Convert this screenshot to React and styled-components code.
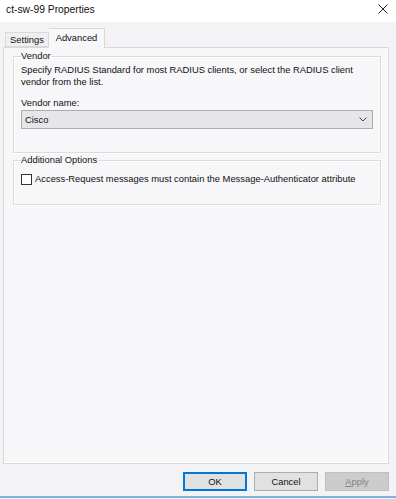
import React from "react";
import styled, { createGlobalStyle } from "styled-components";

const Global = createGlobalStyle`
  html, body { margin: 0; padding: 0; }
  body {
    width: 396px; height: 499px; overflow: hidden;
    background: #f3f2f5;
    font-family: "Liberation Sans", Arial, sans-serif;
    color: #1a1a1a;
  }
`;

const Window = styled.div`
  width: 396px; height: 499px;
  display: flex; flex-direction: column;
  background: #f3f2f5;
`;

const TitleBar = styled.div`
  height: 22px; flex: none;
  background: #ffffff;
  display: flex; align-items: center; justify-content: space-between;
  padding: 0 8px 2px 6px; box-sizing: border-box;
`;

const Title = styled.span`
  font-size: 10.3px; color: #111; line-height: 12px;
`;

const Close = styled.svg`
  width: 10px; height: 10px; margin-bottom: 2px;
`;

const Body = styled.div`
  flex: 1; display: flex; flex-direction: column;
  padding: 6px 7px 0 3px;
`;

const TabStrip = styled.div`
  display: flex; align-items: flex-end;
  padding-left: 2px; height: 19px;
  position: relative; z-index: 1;
`;

const Tab = styled.div`
  box-sizing: border-box;
  border: 1px solid #d9d9d9;
  border-bottom: ${p => (p.$active ? "none" : "1px solid #d9d9d9")};
  ${p => (p.$active ? "border-left: none;" : "")}
  background: ${p => (p.$active ? "#f7f6f9" : "#efeef1")};
  width: ${p => p.$w}px;
  height: ${p => (p.$active ? 20 : 15)}px;
  margin-bottom: ${p => (p.$active ? -1 : 0)}px;
  font-size: 9.4px; line-height: 12px;
  display: flex; justify-content: center;
  padding-top: ${p => (p.$active ? 3 : 1)}px;
  color: #111;
`;

const Panel = styled.div`
  height: 417px; box-sizing: border-box;
  border: 1px solid #d9d9d9;
  box-shadow: inset -1px -1px 0 #ffffff;
  background: #f7f6f9;
  padding: 2px 7px 0 9px;
`;

const Group = styled.fieldset`
  margin: 0 0 ${p => p.$mb || 0}px 0;
  border: 1px solid #dcdcdc;
  box-shadow: 1px 1px 0 #ffffff, inset 1px 1px 0 #ffffff;
  padding: 2px 7px ${p => p.$pb}px 7px;
  min-width: 0;
`;

const Legend = styled.legend`
  padding: 0 1px 0 0;
  margin-left: 0;
  font-size: 9.4px; line-height: 12px;
  color: #111;
`;

const Text = styled.div`
  font-size: 9.4px; line-height: 12px; color: #111;
  margin-top: ${p => p.$mt || 0}px;
`;

const Select = styled.div`
  margin-top: 1px;
  height: 19px; box-sizing: border-box;
  border: 1px solid #adadad;
  background: #e6e5e8;
  display: flex; align-items: center; justify-content: space-between;
  padding: 0 5px 0 3px;
  font-size: 9.4px; color: #111;
`;

const Chevron = styled.svg`
  width: 8px; height: 5px;
`;

const CheckRow = styled.label`
  margin-top: 5px;
  display: flex; align-items: center; gap: 3px;
  font-size: 9.4px; line-height: 12px; color: #111;
`;

const Box = styled.span`
  width: 11px; height: 11px; box-sizing: border-box;
  border: 1px solid #333333; background: #ffffff;
  flex: none;
`;

const Buttons = styled.div`
  display: flex; justify-content: flex-end; gap: 7px;
  margin-top: 8px; padding-right: 0;
`;

const Button = styled.div`
  width: 64px; height: 19px; box-sizing: border-box;
  display: flex; align-items: center; justify-content: center;
  font-size: 9.4px;
  background: ${p => (p.$disabled ? "#cccccc" : "#e1e1e1")};
  border: 1px solid ${p => (p.$primary ? "#0078d7" : p.$disabled ? "#bfbfbf" : "#adadad")};
  ${p => (p.$primary ? "box-shadow: inset 0 0 0 1px #0078d7;" : "")}
  color: ${p => (p.$disabled ? "#838383" : "#111")};
`;

const Underline = styled.span`
  text-decoration: underline;
`;

const Spacer = styled.div`
  flex: 1;
`;

const BottomEdge = styled.div`
  height: 3px; flex: none;
  border-top: 2px solid #79b3de;
  box-sizing: border-box;
  background: #e9f1f8;
`;

export default function App() {
  return (
    <Window>
      <Global />
      <TitleBar>
        <Title>ct-sw-99 Properties</Title>
        <Close viewBox="0 0 10 10">
          <path d="M0.5 0.5 L9.5 9.5 M9.5 0.5 L0.5 9.5" stroke="#222" strokeWidth="1" fill="none" />
        </Close>
      </TitleBar>
      <Body>
        <TabStrip>
          <Tab $w={44}>Settings</Tab>
          <Tab $w={56} $active>Advanced</Tab>
        </TabStrip>
        <Panel>
          <Group $pb={23} $mb={1}>
            <Legend>Vendor</Legend>
            <Text>
              Specify RADIUS Standard for most RADIUS clients, or select the RADIUS client
              <br />
              vendor from the list.
            </Text>
            <Text $mt={9}>Vendor name:</Text>
            <Select>
              <span>Cisco</span>
              <Chevron viewBox="0 0 8 5">
                <path d="M0.5 0.5 L4 4 L7.5 0.5" stroke="#444" strokeWidth="1" fill="none" />
              </Chevron>
            </Select>
          </Group>
          <Group $pb={19}>
            <Legend>Additional Options</Legend>
            <CheckRow>
              <Box />
              <span>Access-Request messages must contain the Message-Authenticator attribute</span>
            </CheckRow>
          </Group>
        </Panel>
        <Buttons>
          <Button $primary>OK</Button>
          <Button>Cancel</Button>
          <Button $disabled><Underline>A</Underline>pply</Button>
        </Buttons>
        <Spacer />
      </Body>
      <BottomEdge />
    </Window>
  );
}
